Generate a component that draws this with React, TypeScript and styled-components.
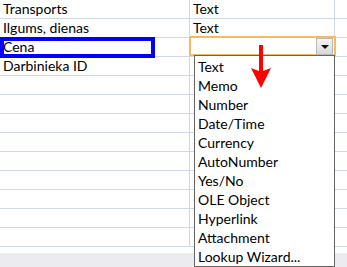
import React from "react";
import styled, { createGlobalStyle } from "styled-components";

const Global = createGlobalStyle`
  html, body { margin: 0; padding: 0; background: #fff; }
  body { font-family: Lato, "Open Sans", sans-serif; overflow: hidden; }
`;

const Page = styled.div`
  position: relative;
  width: 347px;
  height: 267px;
  background: #ebebf0;
  overflow: hidden;
`;

const Sheet = styled.div`
  background: #fff;
  padding-bottom: 6px;
`;

const Row = styled.div`
  display: grid;
  grid-template-columns: 190px 145px 1fr;
  height: 18px;
  border-bottom: 1px solid #d0d7e5;
`;

const Cell = styled.div<{ $last?: boolean }>`
  position: relative;
  padding-left: 3px;
  font-size: 14px;
  line-height: 18px;
  color: #000;
  white-space: nowrap;
  border-right: ${(p) => (p.$last ? "none" : "1px solid #d0d7e5")};
`;

const Selected = styled.div`
  position: absolute;
  left: 0;
  top: -1px;
  width: 147px;
  height: 13px;
  border: 4px solid #0000ff;
  pointer-events: none;
`;

const Combo = styled.div`
  position: absolute;
  left: -1px;
  top: -2px;
  width: 143px;
  height: 16px;
  border: 2px solid #f8b860;
  background: #fff;
  display: flex;
  justify-content: flex-end;
  align-items: center;
  z-index: 2;
`;

const DropButton = styled.div`
  width: 15px;
  height: 15px;
  margin-right: 1px;
  border: 1px solid #b9b9b9;
  background: linear-gradient(#f4f4f4, #d9d9d9);
  display: flex;
  align-items: center;
  justify-content: center;
`;

const Caret = styled.div`
  width: 0;
  height: 0;
  border-left: 4px solid transparent;
  border-right: 4px solid transparent;
  border-top: 4px solid #111;
  margin-top: 2px;
`;

const List = styled.div`
  position: absolute;
  left: 194px;
  top: 55px;
  width: 139px;
  padding-top: 1px;
  border: 1px solid #646464;
  background: #fff;
  z-index: 3;
`;

const Item = styled.div`
  height: 19px;
  line-height: 19px;
  padding-left: 3px;
  font-size: 14px;
  color: #000;
  white-space: nowrap;
`;

const Arrow = styled.svg`
  position: absolute;
  left: 249px;
  top: 44px;
  z-index: 4;
`;

const rows: [string, string][] = [
  ["Transports", "Text"],
  ["Ilgums, dienas", "Text"],
  ["Cena", ""],
  ["Darbinieka ID", ""],
  ["", ""],
  ["", ""],
  ["", ""],
  ["", ""],
  ["", ""],
  ["", ""],
  ["", ""],
  ["", ""],
  ["", ""],
];

const types = [
  "Text",
  "Memo",
  "Number",
  "Date/Time",
  "Currency",
  "AutoNumber",
  "Yes/No",
  "OLE Object",
  "Hyperlink",
  "Attachment",
  "Lookup Wizard...",
];

export default function App() {
  return (
    <>
      <Global />
      <Page>
        <Sheet>
          {rows.map(([name, type], i) => (
            <Row key={i}>
              <Cell>
                {name}
                {i === 2 && <Selected />}
              </Cell>
              <Cell>
                {type}
                {i === 2 && (
                  <Combo>
                    <DropButton>
                      <Caret />
                    </DropButton>
                  </Combo>
                )}
              </Cell>
              <Cell $last />
            </Row>
          ))}
        </Sheet>
        <List>
          {types.map((t) => (
            <Item key={t}>{t}</Item>
          ))}
        </List>
        <Arrow width="24" height="46" viewBox="0 0 24 46">
          <polygon points="10,1 14,1 14,27 22,24 12,44 2,24 10,27" fill="#ff0000" />
        </Arrow>
      </Page>
    </>
  );
}
